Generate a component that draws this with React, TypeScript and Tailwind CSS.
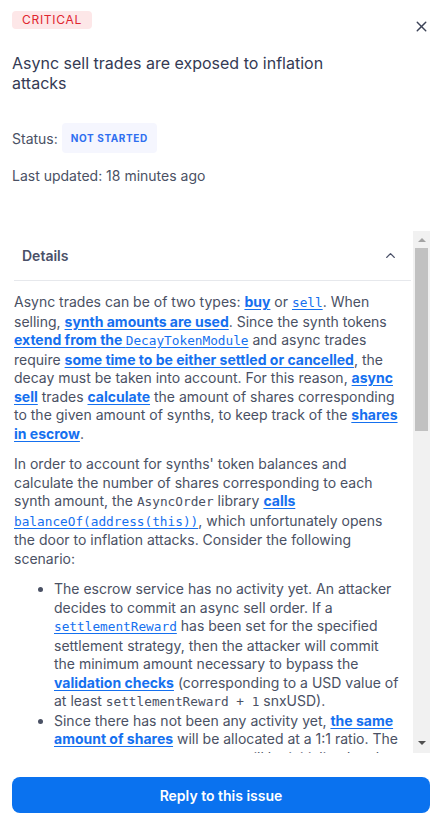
import { X, ChevronUp } from 'lucide-react';

const mono = "font-['DejaVu_Sans_Mono',monospace] text-[12.75px] font-normal";
const link = 'text-[#1570ef] font-bold underline underline-offset-2';

function Code({ children, linked }: { children: React.ReactNode; linked?: boolean }) {
  return <code className={`${mono} ${linked ? 'text-[#1570ef]' : 'text-[#4a5164]'}`}>{children}</code>;
}

// classic scrollbar look, since the headless browser only gives overlay ones
function ScrollTrack() {
  return (
    <div className="w-[17px] shrink-0 bg-[#f1f1f1] flex flex-col items-center">
      <div className="h-[17px] flex items-center justify-center">
        <div className="w-0 h-0 border-l-[4px] border-r-[4px] border-b-[4px] border-l-transparent border-r-transparent border-b-[#a3a3a3]" />
      </div>
      <div className="h-[183px] w-[13px] bg-[#c1c1c1]" />
      <div className="flex-1" />
      <div className="h-[20px] flex items-center justify-center">
        <div className="w-0 h-0 border-l-[4px] border-r-[4px] border-t-[4px] border-l-transparent border-r-transparent border-t-[#505050]" />
      </div>
    </div>
  );
}

export default function App() {
  return (
    <div className="w-[442px] h-[825px] bg-white px-3 pt-[11px] font-['Inter',sans-serif] text-[#4a5164] overflow-hidden">
      <div className="flex justify-between items-start h-[18px]">
        <span className="h-[18px] px-[10px] rounded-[4px] bg-[#fde7e8] text-[#e0252f] text-[12px] tracking-[0.06em] leading-[18px]">
          CRITICAL
        </span>
        <button className="mt-[7px] text-[#3c4257]">
          <X size={17} strokeWidth={2} />
        </button>
      </div>

      <h1 className="mt-[24px] max-w-[330px] text-[16px] leading-[20px] text-[#343a54] font-normal">
        Async sell trades are exposed to inflation attacks
      </h1>

      <div className="mt-[30px] flex items-center gap-[4px] text-[14px]">
        <span>Status:</span>
        <span className="h-[30px] px-[9px] flex items-center rounded-[4px] bg-[#f5f6fe] text-[#2f6ff0] text-[10px] font-bold tracking-[0.06em]">
          NOT STARTED
        </span>
      </div>

      <div className="mt-[13px] text-[14px] leading-[20px]">Last updated: 18 minutes ago</div>

      <div className="mt-[45px] h-[522px] flex">
        <div className="flex-1 min-w-0 overflow-hidden">
          <div className="mx-[2px] h-[50px] flex items-center justify-between pl-[8px] pr-[13px] border-b border-[#e6e8ec]">
            <span className="text-[14px] font-semibold text-[#4a5068]">Details</span>
            <ChevronUp size={15} strokeWidth={2.2} className="text-[#4a5068]" />
          </div>
          <div className="pl-[2px] pr-[7px] pt-[12px] pb-4 text-[14px] leading-[18.5px]">
            <p>
              Async trades can be of two types: <a className={link}>buy</a> or{' '}
              <a className={link}><Code linked>sell</Code></a>. When selling,{' '}
              <a className={link}>synth amounts are used</a>. Since the synth tokens{' '}
              <a className={link}>extend from the <Code linked>DecayTokenModule</Code></a> and async trades require{' '}
              <a className={link}>some time to be either settled or cancelled</a>, the decay must be taken into account.
              For this reason, <a className={link}>async sell</a> trades <a className={link}>calculate</a> the amount of
              shares corresponding to the given amount of synths, to keep track of the{' '}
              <a className={link}>shares in escrow</a>.
            </p>
            <p className="mt-[12px]">
              In order to account for synths' token balances and calculate the number of shares corresponding to each
              synth amount, the <Code>AsyncOrder</Code> library{' '}
              <a className={link}>calls <Code linked>balanceOf(address(this))</Code></a>, which unfortunately opens the
              door to inflation attacks. Consider the following scenario:
            </p>
            <ul className="mt-[12px] pl-[40px] pr-[3px] list-disc marker:text-[#4a5164]">
              <li>
                The escrow service has no activity yet. An attacker decides to commit an async sell order. If a{' '}
                <a className={link}><Code linked>settlementReward</Code></a> has been set for the specified settlement
                strategy, then the attacker will commit the minimum amount necessary to bypass the{' '}
                <a className={link}>validation checks</a> (corresponding to a USD value of at least{' '}
                <Code>settlementReward + 1</Code> snxUSD).
              </li>
              <li>
                Since there has not been any activity yet, <a className={link}>the same amount of shares</a> will be
                allocated at a 1:1 ratio. The <a className={link}><Code linked>totalEscrowedSynthShares</Code></a> will
                be initialized to the amount of synths sent by the attacker.
              </li>
              <li>
                The attacker then transfers a large amount of synths directly to the escrow, inflating the value of each
                share.
              </li>
            </ul>
          </div>
        </div>
        <ScrollTrack />
      </div>

      <button className="mt-[24px] w-full h-[36px] rounded-[8px] bg-[#0a72ef] text-white text-[14px] font-semibold">
        Reply to this issue
      </button>
    </div>
  );
}
